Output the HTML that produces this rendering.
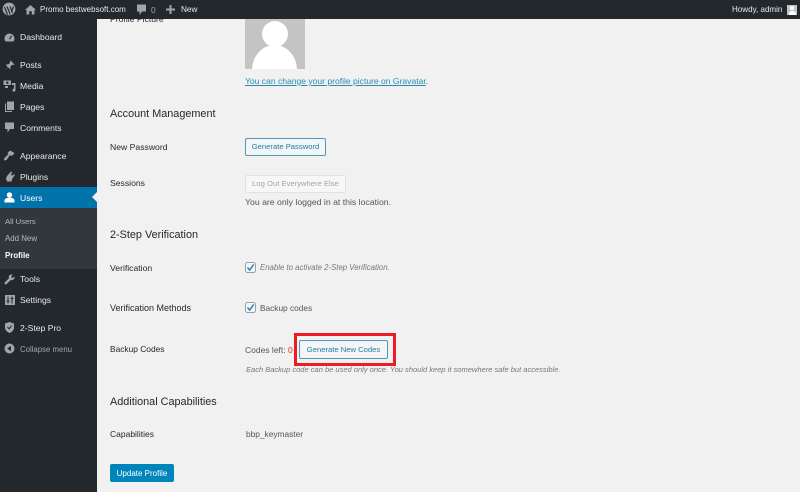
<!DOCTYPE html>
<html><head><meta charset="utf-8"><style>
html,body{margin:0;padding:0}
body{width:800px;height:492px;overflow:hidden;background:#f1f1f1;position:relative;font-family:"Liberation Sans",sans-serif;font-size:8.6px;color:#555}
.t{position:absolute;white-space:nowrap;line-height:12px}
.s{color:#e8e8e8;font-size:8.6px}
.l{color:#23282d;font-size:8.65px}
.h{color:#23282d;font-size:10.85px;line-height:14px}
.b{position:absolute;box-sizing:border-box;border-radius:2px;text-align:center;white-space:nowrap;font-size:7.65px}
svg{position:absolute}
</style></head><body>
<div style="position:absolute;left:245px;top:19px;width:60px;height:50px;background:#c4c4c4;overflow:hidden"><div style="position:absolute;left:17px;top:2px;width:26px;height:26px;border-radius:50%;background:#fff"></div><div style="position:absolute;left:7px;top:26px;width:45px;height:50px;border-radius:50% 50% 0 0;background:#fff"></div></div>
<div class="t l" style="left:110px;top:13px">Profile Picture</div>

<div style="position:absolute;left:0;top:0;width:97px;height:492px;background:#23282d"></div>
<div style="position:absolute;left:0;top:187px;width:97px;height:21px;background:#0073aa"></div>
<div style="position:absolute;left:0;top:208px;width:97px;height:61px;background:#32373c"></div>
<div style="position:absolute;left:92px;top:192px;width:0;height:0;border:5px solid transparent;border-right-color:#f1f1f1;border-left:0"></div>
<div style="position:absolute;left:0;top:0;width:800px;height:19px;background:#23282d"></div>

<svg style="left:2px;top:2px" width="14" height="14" viewBox="0 0 14 14"><circle cx="7" cy="7" r="6.4" fill="#a0a5aa"/><path d="M2.5 5 L5.5 12.5 M5 4.5 L8.3 12.5 M8 4.5 L10.5 11 M11.5 4.5 L9.5 10" stroke="#23282d" stroke-width="1.1" fill="none"/></svg>
<svg style="left:25px;top:4px" width="11" height="11" viewBox="0 0 11 11"><path d="M5.5 1 L11 6 L9.5 6 L9.5 10.5 L6.8 10.5 L6.8 7.3 L4.2 7.3 L4.2 10.5 L1.5 10.5 L1.5 6 L0 6 Z" fill="#a0a5aa"/></svg>
<div class="t s" style="left:40px;top:4px;font-size:8px">Promo bestwebsoft.com</div>
<svg style="left:136px;top:4px" width="11" height="12" viewBox="0 0 11 12"><path d="M1 0.5 H10 V7.5 H6 L3.5 11 V7.5 H1 Z" fill="#a0a5aa"/></svg>
<div class="t" style="left:151px;top:4px;font-size:8.4px;color:#a0a5aa">0</div>
<svg style="left:166px;top:5px" width="9" height="9" viewBox="0 0 9 9"><path d="M3.5 0 H5.5 V3.5 H9 V5.5 H5.5 V9 H3.5 V5.5 H0 V3.5 H3.5 Z" fill="#a0a5aa"/></svg>
<div class="t s" style="left:181px;top:4px;font-size:8.2px">New</div>
<div class="t s" style="left:732px;top:4px;font-size:8.05px">Howdy, admin</div>
<div style="position:absolute;left:787px;top:5px;width:10px;height:10px;background:#c4c4c4;overflow:hidden"><div style="position:absolute;left:3px;top:1px;width:4px;height:4px;border-radius:50%;background:#fff"></div><div style="position:absolute;left:1.5px;top:5.5px;width:7px;height:6px;border-radius:50% 50% 0 0;background:#fff"></div></div>

<svg style="left:4px;top:32px" width="11" height="11" viewBox="0 0 11 11"><path d="M5.5 1.5 A5 5 0 0 0 0.5 6.5 C0.5 8 1 9 1.8 9.5 H9.2 C10 9 10.5 8 10.5 6.5 A5 5 0 0 0 5.5 1.5 Z" fill="#a0a5aa"/><path d="M5.5 7.2 L7.5 3.8" stroke="#23282d" stroke-width="1.2"/></svg>
<div class="t s" style="left:20px;top:31px">Dashboard</div>
<svg style="left:4px;top:60px" width="11" height="11" viewBox="0 0 11 11"><path d="M6.5 0.5 L10.5 4.5 L9.3 5 L8 4.8 L6.4 6.6 L6.5 8.5 L5.8 9 L3.8 7 L0.6 10.5 L3.6 6.8 L1.8 5 L2.5 4.4 L4.3 4.5 L6.1 2.8 L5.9 1.6 Z" fill="#a0a5aa"/></svg>
<div class="t s" style="left:20px;top:59px">Posts</div>
<svg style="left:3px;top:80px" width="13" height="12" viewBox="0 0 13 12"><path d="M0.5 0.5 H8 V5 H0.5 V0.5 Z M2 6 H5 V8 H2 Z M9 3 H12.5 V10 A1.5 1.5 0 1 1 11 8.6 V5 H9 Z" fill="#a0a5aa"/><circle cx="4.3" cy="2.7" r="1.2" fill="#23282d"/></svg>
<div class="t s" style="left:20px;top:80px">Media</div>
<svg style="left:4px;top:101px" width="11" height="12" viewBox="0 0 11 12"><path d="M3 0.5 H10 V9 H3 Z" fill="#a0a5aa"/><path d="M1 2.5 V11 H8 V10 H2 V2.5 Z" fill="#a0a5aa"/></svg>
<div class="t s" style="left:20px;top:101px">Pages</div>
<svg style="left:4px;top:122px" width="11" height="11" viewBox="0 0 11 11"><path d="M1 0.5 H10 V7 H6 L3.5 10.5 V7 H1 Z" fill="#a0a5aa"/></svg>
<div class="t s" style="left:20px;top:122px">Comments</div>
<svg style="left:3px;top:150px" width="12" height="11" viewBox="0 0 12 11"><path d="M7 0.5 L11.5 3 L9 6 L7 5 L3.5 10 L0.8 10.5 L1.5 8 L5.5 4 L4.5 3 Z" fill="#a0a5aa"/></svg>
<div class="t s" style="left:20px;top:150px">Appearance</div>
<svg style="left:4px;top:171px" width="11" height="11" viewBox="0 0 11 11"><path d="M7 0.5 L8.3 1.5 L6.8 3.5 L8.5 4.8 L10 3 L10.8 4 L8.3 7.5 L7.5 10.5 H3 L2 7.5 L3 5 Z" fill="#a0a5aa"/></svg>
<div class="t s" style="left:20px;top:171px">Plugins</div>
<svg style="left:4px;top:192px" width="11" height="11" viewBox="0 0 11 11"><circle cx="5.5" cy="3" r="2.7" fill="#fff"/><path d="M0.5 10.5 V8.5 C0.5 7 2 6 4 5.7 H7 C9 6 10.5 7 10.5 8.5 V10.5 Z" fill="#fff"/></svg>
<div class="t" style="left:20px;top:192px;color:#fff">Users</div>
<div class="t" style="left:5px;top:216px;font-size:7.7px;color:#b4b9be">All Users</div>
<div class="t" style="left:5px;top:233px;font-size:7.9px;color:#b4b9be">Add New</div>
<div class="t" style="left:5px;top:250px;font-size:7.9px;color:#fff;font-weight:bold">Profile</div>
<svg style="left:4px;top:274px" width="11" height="11" viewBox="0 0 11 11"><path d="M10.5 2.5 L8.5 4 L7 3 L8.5 0.7 C6.5 0 4.8 1.2 4.8 3.2 L5 4.2 L0.7 8.5 C0 9.5 1.3 11 2.4 10.2 L6.8 6 C9 6.5 11 5 10.5 2.5 Z" fill="#a0a5aa"/></svg>
<div class="t s" style="left:20px;top:273px">Tools</div>
<svg style="left:5px;top:295px" width="10" height="10" viewBox="0 0 10 10"><rect width="10" height="10" rx="0.5" fill="#a0a5aa"/><path d="M3 1.5 V8.5 M7 1.5 V8.5 M1.5 6 H4.5 M5.5 3.5 H8.5" stroke="#23282d" stroke-width="1"/></svg>
<div class="t s" style="left:20px;top:294px">Settings</div>
<svg style="left:5px;top:322px" width="9" height="11" viewBox="0 0 9 11"><path d="M4.5 0 L9 1.5 V5.5 C9 8 7 10 4.5 11 C2 10 0 8 0 5.5 V1.5 Z" fill="#a0a5aa"/><path d="M2.5 5 L4 6.8 L6.8 3.5" stroke="#23282d" stroke-width="1" fill="none"/></svg>
<div class="t s" style="left:20px;top:322px">2-Step Pro</div>
<svg style="left:4px;top:343px" width="11" height="11" viewBox="0 0 11 11"><circle cx="5.5" cy="5.5" r="5" fill="#a0a5aa"/><path d="M7 2.8 V8.2 L3.2 5.5 Z" fill="#23282d"/></svg>
<div class="t" style="left:20px;top:344px;font-size:7.8px;color:#a0a5aa">Collapse menu</div>

<div class="t" style="left:245px;top:75px;font-size:8.55px;color:#2b8ab5"><span style="text-decoration:underline">You can change your profile picture on Gravatar</span><span style="color:#555">.</span></div>

<div class="t h" style="left:110px;top:107px">Account Management</div>
<div class="t l" style="left:110px;top:141px">New Password</div>
<div class="b" style="left:245px;top:138px;width:81px;height:18px;line-height:16px;border:1px solid #4f98ba;color:#1d7ea8;background:#f3f5f6">Generate Password</div>
<div class="t l" style="left:110px;top:177px">Sessions</div>
<div class="b" style="left:245px;top:175px;width:101px;height:18px;line-height:16px;border:1px solid #e2e2e2;color:#a0a5aa;background:#f7f7f7">Log Out Everywhere Else</div>
<div class="t" style="left:245px;top:196px;font-size:8.7px">You are only logged in at this location.</div>

<div class="t h" style="left:110px;top:228px">2-Step Verification</div>
<div class="t l" style="left:110px;top:262px">Verification</div>
<svg style="left:245px;top:262px" width="11" height="11" viewBox="0 0 11 11"><rect x="0.5" y="0.5" width="10" height="10" rx="2" fill="#f6f6f6" stroke="#9aa0a6"/><path d="M2.5 5.5 L4.7 8 L8.7 2.5" stroke="#1e8cbe" stroke-width="1.5" fill="none"/></svg>
<div class="t" style="left:260px;top:262px;font-size:7.8px;font-style:italic;color:#777">Enable to activate 2-Step Verification.</div>
<div class="t l" style="left:110px;top:302px;font-size:9px">Verification Methods</div>
<svg style="left:245px;top:302px" width="11" height="11" viewBox="0 0 11 11"><rect x="0.5" y="0.5" width="10" height="10" rx="2" fill="#f6f6f6" stroke="#9aa0a6"/><path d="M2.5 5.5 L4.7 8 L8.7 2.5" stroke="#1e8cbe" stroke-width="1.5" fill="none"/></svg>
<div class="t" style="left:260px;top:302px;font-size:8.3px">Backup codes</div>
<div class="t l" style="left:110px;top:343px;font-size:8.4px">Backup Codes</div>
<div class="t" style="left:245px;top:344px;font-size:8.5px">Codes left: <span style="color:#e02b20">0</span></div>
<div style="position:absolute;left:294px;top:333px;width:102px;height:33px;box-sizing:border-box;border:3px solid #ed1c24"></div>
<div class="b" style="left:299px;top:340px;width:89px;height:19px;line-height:17px;border:1px solid #4f98ba;color:#1d7ea8;background:#f3f5f6">Generate New Codes</div>
<div class="t" style="left:246px;top:364px;font-size:7.53px;font-style:italic;color:#777">Each Backup code can be used only once. You should keep it somewhere safe but accessible.</div>

<div class="t h" style="left:110px;top:395px">Additional Capabilities</div>
<div class="t l" style="left:110px;top:428px;font-size:8.5px">Capabilities</div>
<div class="t" style="left:246px;top:428px;font-size:8.35px">bbp_keymaster</div>
<div class="b" style="left:110px;top:464px;width:64px;height:18px;line-height:19px;background:#0085ba;color:#fff;font-size:8px">Update Profile</div>
</body></html>
